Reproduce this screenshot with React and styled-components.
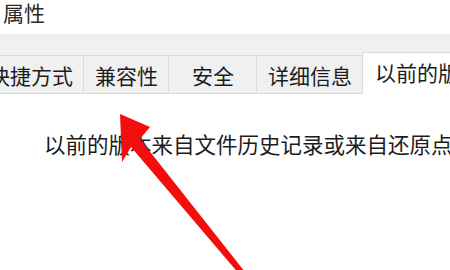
import styled, { createGlobalStyle } from "styled-components";

const GlobalStyle = createGlobalStyle`
  html, body {
    margin: 0;
    padding: 0;
    background: #ffffff;
    overflow: hidden;
  }
  * {
    box-sizing: border-box;
  }
`;

const Window = styled.div`
  position: relative;
  width: 450px;
  height: 270px;
  overflow: hidden;
  background: #ffffff;
  font-family: "Noto Sans CJK SC", "Noto Sans", sans-serif;
  color: #1c1c1c;
`;

const TitleBar = styled.div`
  height: 34px;
  padding-left: 3px;
  font-size: 21px;
  line-height: 24px;
  color: #2a2a2a;
  white-space: nowrap;
`;

const TabStrip = styled.div`
  display: flex;
  align-items: flex-start;
  padding-top: 21px;
  margin-left: -23px;
  background: #f0f0f0;
  border-bottom: 1px solid #d9d9d9;
  white-space: nowrap;
`;

const Tab = styled.div`
  flex: none;
  display: flex;
  align-items: center;
  justify-content: center;
  height: 38px;
  min-width: ${(p) => p.$minWidth || 0}px;
  margin-left: -1px;
  padding: 0 10px 0 11px;
  border: 1px solid #dadada;
  border-bottom: none;
  background: #f0f0f0;
  font-size: 21px;
  line-height: 24px;
  color: #1c1c1c;

  &:first-child {
    margin-left: 0;
  }

  &.active {
    height: 42px;
    margin-top: -3px;
    margin-bottom: -1px;
    align-items: flex-start;
    justify-content: flex-start;
    padding-top: 7px;
    padding-left: 12px;
    background: #ffffff;
    border-color: #d9d9d9;
  }
`;

const Content = styled.div`
  padding: 36px 0 0 44px;
  font-size: 21.5px;
  line-height: 28px;
  color: #1c1c1c;
  white-space: nowrap;
`;

const ArrowLayer = styled.svg`
  position: absolute;
  left: 0;
  top: 0;
  pointer-events: none;
`;

const tabs = [
  { label: "快捷方式" },
  { label: "兼容性" },
  { label: "安全", minWidth: 89 },
  { label: "详细信息" },
  { label: "以前的版本", active: true },
];

export default function App() {
  return (
    <>
      <GlobalStyle />
      <Window>
        <TitleBar>属性</TitleBar>
        <TabStrip>
          {tabs.map((t) => (
            <Tab
              key={t.label}
              className={t.active ? "active" : ""}
              $minWidth={t.minWidth}
            >
              {t.label}
            </Tab>
          ))}
        </TabStrip>
        <Content>以前的版本来自文件历史记录或来自还原点。</Content>
        <ArrowLayer width="450" height="270" viewBox="0 0 450 270">
          <polygon
            points="120,114 150,127 140,139 245,272 240,275 131,147 122,162"
            fill="#f40d0d"
          />
        </ArrowLayer>
      </Window>
    </>
  );
}
